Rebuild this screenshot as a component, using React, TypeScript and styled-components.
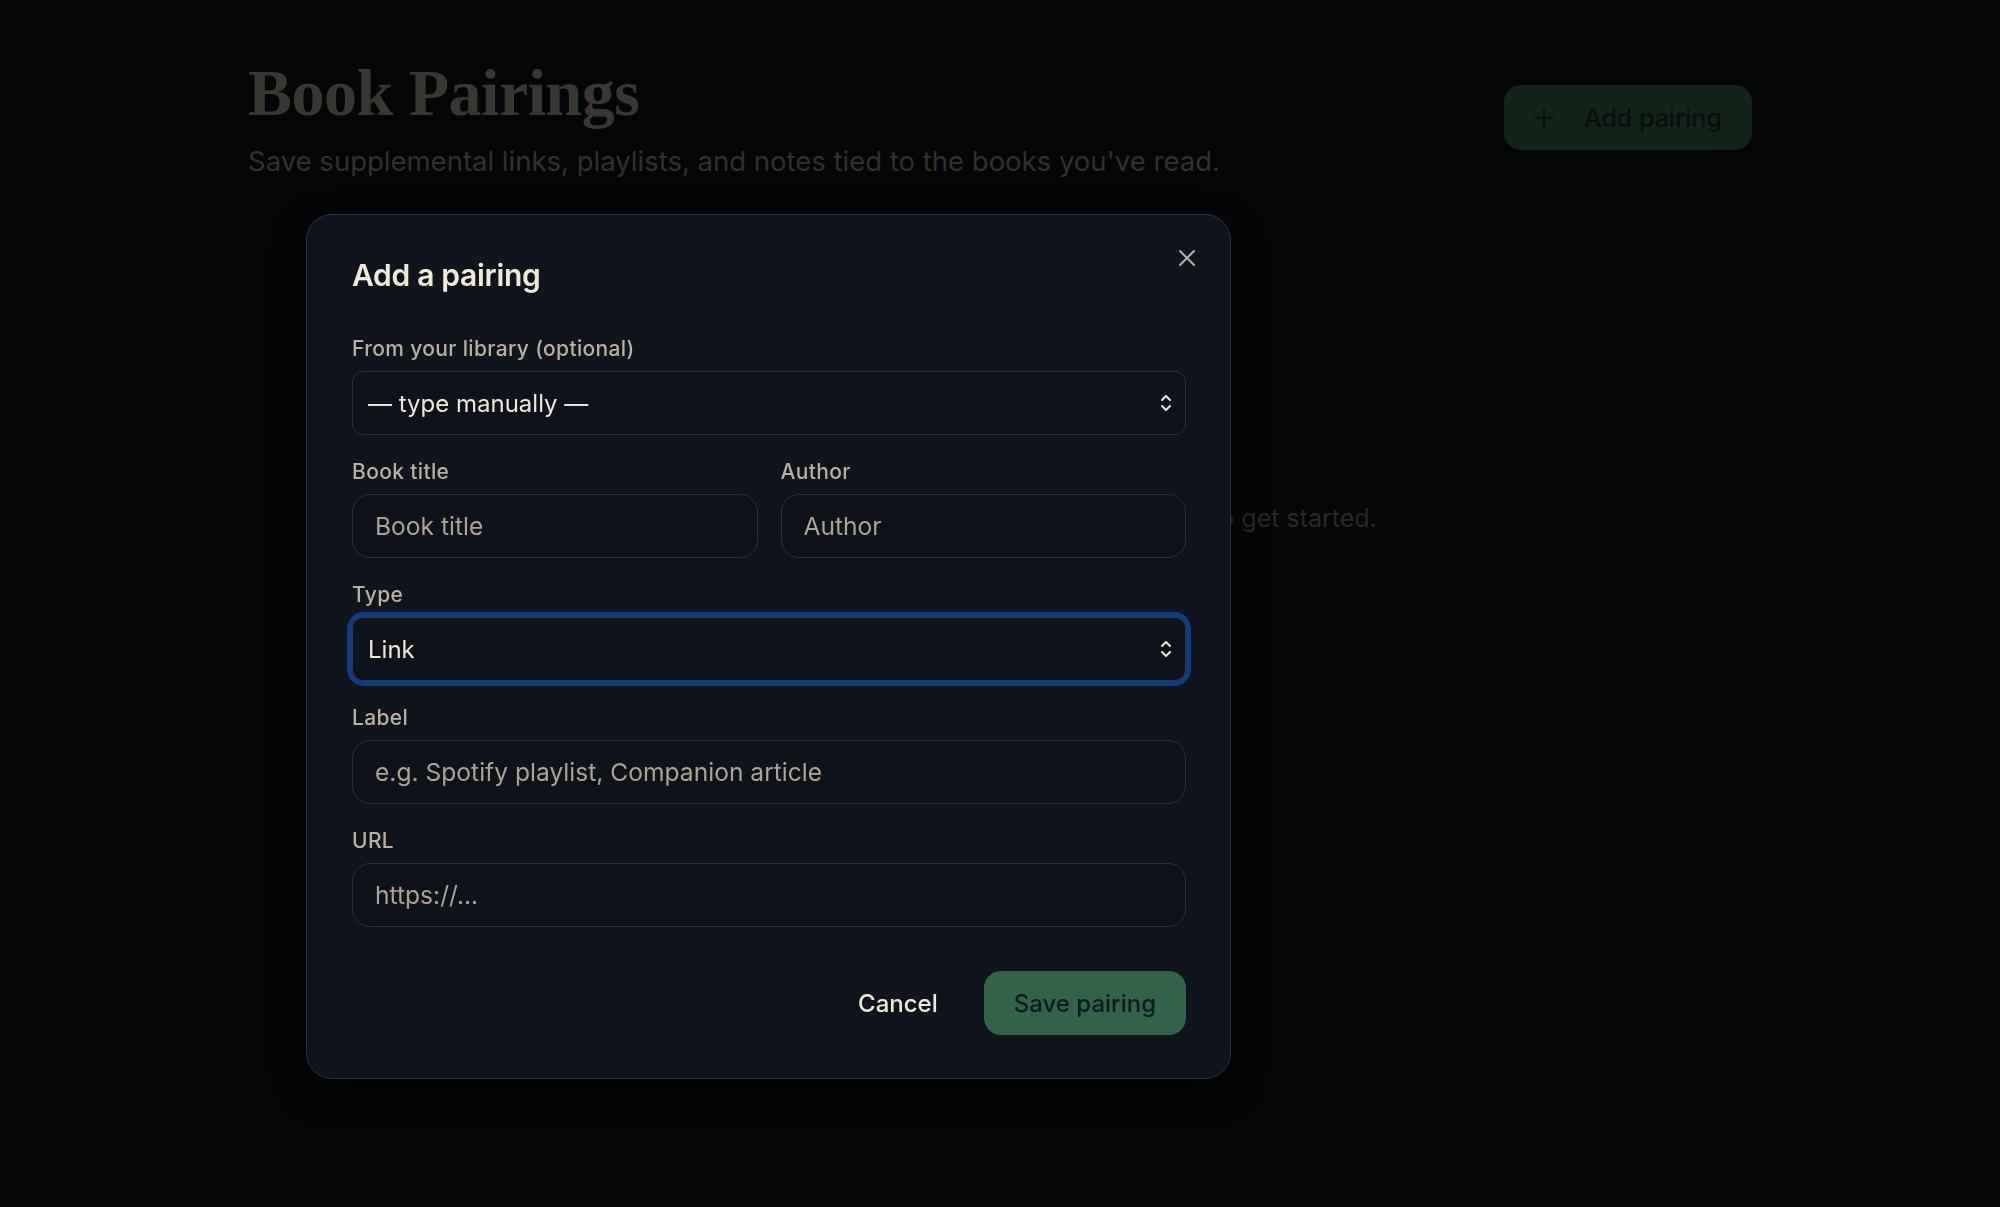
import styled, { createGlobalStyle, css } from "styled-components";

const GlobalStyle = createGlobalStyle`
  * { box-sizing: border-box; }
  html, body { margin: 0; padding: 0; background: #0c0f14; }
  body {
    font-family: Inter, "Noto Sans", "Liberation Sans", sans-serif;
    -webkit-font-smoothing: antialiased;
  }
`;

const Page = styled.div`
  position: relative;
  height: 100vh;
  overflow: hidden;
  background: #0c0f14;
`;

const Container = styled.main`
  max-width: 1504px;
  margin: 0 auto;
  padding: 57px 0 0;
`;

const Header = styled.header`
  display: flex;
  justify-content: space-between;
  align-items: flex-start;
`;

const TitleBlock = styled.div`
  display: flex;
  flex-direction: column;
  gap: 16px;
`;

const PageTitle = styled.h1`
  margin: 0;
  font-family: "Liberation Serif", "DejaVu Serif", serif;
  font-weight: 700;
  font-size: 66px;
  line-height: 72px;
  letter-spacing: -0.5px;
  color: #918a7d;
`;

const Subtitle = styled.p`
  margin: 0;
  font-size: 27.5px;
  line-height: 32px;
  color: #807870;
`;

const PrimaryButton = styled.button<{ $size?: "lg" | "md" }>`
  display: inline-flex;
  align-items: center;
  border: 0;
  border-radius: 17px;
  font-family: inherit;
  font-weight: 500;
  cursor: pointer;
  ${(p) =>
    p.$size === "lg"
      ? css`
          margin-top: 28px;
          height: 65px;
          gap: 29px;
          padding: 0 30px 0 29px;
          font-size: 25px;
          background: #2f5841;
          color: #19261e;
        `
      : css`
          height: 64px;
          padding: 0 30px;
          font-size: 24px;
          background: #336249;
          color: #121922;
        `}
`;

const EmptyState = styled.p`
  margin: 0;
  padding-top: 326px;
  text-align: center;
  font-size: 25px;
  color: #6c675f;
`;

const Backdrop = styled.div`
  position: fixed;
  inset: 0;
  background: rgba(0, 0, 0, 0.6);
`;

const Dialog = styled.section`
  position: absolute;
  left: 306px;
  top: 214px;
  width: 925px;
  padding: 40px 44px 43px 45px;
  background: #10141d;
  border: 1px solid #2b3342;
  border-radius: 26px;
  box-shadow: 0 12px 32px rgba(0, 0, 0, 0.5);
  display: flex;
  flex-direction: column;
`;

const DialogTitle = styled.h2`
  margin: 0 0 40px;
  font-size: 30px;
  line-height: 40px;
  font-weight: 600;
  letter-spacing: -0.3px;
  color: #f1e9da;
`;

const CloseButton = styled.button`
  position: absolute;
  top: 33px;
  right: 33px;
  width: 20px;
  height: 20px;
  padding: 0;
  border: 0;
  background: none;
  color: #b9b0a3;
  display: grid;
  place-items: center;
  cursor: pointer;
`;

const Form = styled.div`
  display: flex;
  flex-direction: column;
  gap: 23px;
`;

const Row = styled.div`
  display: grid;
  grid-template-columns: 1fr 1fr;
  gap: 23px;
`;

const Field = styled.label`
  display: flex;
  flex-direction: column;
  gap: 8px;
`;

const FieldLabel = styled.span`
  font-size: 21px;
  line-height: 28px;
  font-weight: 500;
  letter-spacing: 0.35px;
  color: #bbb09f;
`;

const controlBase = css`
  width: 100%;
  height: 64px;
  background: #0e121a;
  border: 1.5px solid #2a3140;
  font-family: inherit;
  color: #efe7d8;
  outline: none;
`;

const TextInput = styled.input`
  ${controlBase};
  font-size: 24.6px;
  border-radius: 18px;
  padding: 0 22px;

  &::placeholder {
    color: #ada392;
    opacity: 1;
  }
`;

const SelectWrap = styled.div<{ $focused?: boolean }>`
  position: relative;
  border-radius: 12px;
  ${(p) =>
    p.$focused &&
    css`
      box-shadow: 0 0 0 5px #0d3e80;
    `}
`;

const Select = styled.select<{ $focused?: boolean }>`
  ${controlBase};
  font-size: 24px;
  appearance: none;
  border-radius: 11px;
  padding: 0 48px 0 15px;
  border-color: ${(p) => (p.$focused ? "#343b48" : "#2a3140")};
`;

const Chevron = styled.span`
  position: absolute;
  right: 13px;
  top: 50%;
  transform: translateY(-50%);
  width: 14px;
  height: 22px;
  color: #efe7d8;
  pointer-events: none;
  display: grid;
  place-items: center;
`;

const Actions = styled.div`
  display: flex;
  justify-content: flex-end;
  align-items: center;
  gap: 12px;
  margin-top: 44px;
`;

const GhostButton = styled.button`
  height: 64px;
  padding: 0 34px;
  border: 0;
  background: none;
  font-family: inherit;
  font-weight: 500;
  font-size: 24px;
  color: #f1e9da;
  cursor: pointer;
`;

function PlusIcon() {
  return (
    <svg width="22" height="22" viewBox="0 0 22 22" fill="none" stroke="currentColor" strokeWidth="2" strokeLinecap="round">
      <path d="M11 2v18M2 11h18" />
    </svg>
  );
}

function XIcon() {
  return (
    <svg width="18" height="18" viewBox="0 0 18 18" fill="none" stroke="currentColor" strokeWidth="2" strokeLinecap="round">
      <path d="M2 2l14 14M16 2L2 16" />
    </svg>
  );
}

function UpDown() {
  return (
    <svg width="12" height="20" viewBox="0 0 12 20" fill="none" stroke="currentColor" strokeWidth="2" strokeLinecap="round" strokeLinejoin="round">
      <path d="M2 7l4-4 4 4M2 13l4 4 4-4" />
    </svg>
  );
}

function SelectField({ value, options, focused }: { value: string; options: string[]; focused?: boolean }) {
  return (
    <SelectWrap $focused={focused}>
      <Select $focused={focused} defaultValue={value}>
        {options.map((o) => (
          <option key={o}>{o}</option>
        ))}
      </Select>
      <Chevron>
        <UpDown />
      </Chevron>
    </SelectWrap>
  );
}

export default function App() {
  return (
    <Page>
      <GlobalStyle />
      <Container>
        <Header>
          <TitleBlock>
            <PageTitle>Book Pairings</PageTitle>
            <Subtitle>Save supplemental links, playlists, and notes tied to the books you've read.</Subtitle>
          </TitleBlock>
          <PrimaryButton $size="lg">
            <PlusIcon />
            Add pairing
          </PrimaryButton>
        </Header>
        <EmptyState>You haven't saved any pairings yet. Add one now to get started.</EmptyState>
      </Container>

      <Backdrop />
      <Dialog role="dialog" aria-label="Add a pairing">
        <DialogTitle>Add a pairing</DialogTitle>
        <CloseButton aria-label="Close">
          <XIcon />
        </CloseButton>
        <Form>
          <Field>
            <FieldLabel>From your library (optional)</FieldLabel>
            <SelectField value="— type manually —" options={["— type manually —"]} />
          </Field>
          <Row>
            <Field>
              <FieldLabel>Book title</FieldLabel>
              <TextInput placeholder="Book title" />
            </Field>
            <Field>
              <FieldLabel>Author</FieldLabel>
              <TextInput placeholder="Author" />
            </Field>
          </Row>
          <Field>
            <FieldLabel>Type</FieldLabel>
            <SelectField value="Link" options={["Link", "Playlist", "Note"]} focused />
          </Field>
          <Field>
            <FieldLabel>Label</FieldLabel>
            <TextInput placeholder="e.g. Spotify playlist, Companion article" />
          </Field>
          <Field>
            <FieldLabel>URL</FieldLabel>
            <TextInput placeholder="https://..." />
          </Field>
        </Form>
        <Actions>
          <GhostButton>Cancel</GhostButton>
          <PrimaryButton>Save pairing</PrimaryButton>
        </Actions>
      </Dialog>
    </Page>
  );
}
